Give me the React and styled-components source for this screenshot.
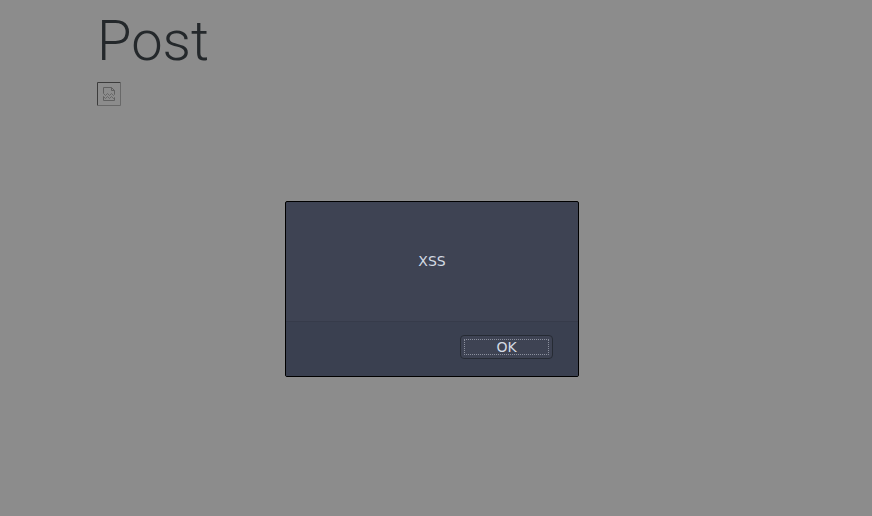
import React from 'react';
import styled, { createGlobalStyle } from 'styled-components';

const GlobalStyle = createGlobalStyle`
  * { box-sizing: border-box; }
  body { margin: 0; background: #8c8c8c; }
`;

const Page = styled.main`
  min-height: 100vh;
  padding: 8px 97px;
`;

const Title = styled.h1`
  margin: 0 0 8px;
  font: 300 56px/66px Roboto, sans-serif;
  color: #24282b;
`;

const MissingImage = styled.svg`
  display: block;
`;

const Overlay = styled.div`
  position: fixed;
  inset: 0;
  display: flex;
  justify-content: center;
  align-items: flex-start;
  padding: 201px 8px 0 0;
`;

const Dialog = styled.section`
  width: 294px;
  max-width: 100%;
  overflow: hidden;
  border: 1px solid #000;
  border-radius: 2px;
  background: #3e4353;
  color: #d3dae3;
  font: 14px/18px "DejaVu Sans", sans-serif;
`;

const Message = styled.p`
  margin: 0;
  padding: 50px 16px 51px;
  text-align: center;
`;

const Footer = styled.footer`
  display: flex;
  justify-content: flex-end;
  padding: 13px 25px 17px;
  border-top: 1px solid #363b4a;
  background: #3a4050;
`;

const OkButton = styled.button`
  width: 93px;
  height: 24px;
  padding: 3px;
  border: 1px solid #262b34;
  border-radius: 4px;
  background: #3e4353;
  color: inherit;
  font: inherit;
`;

const FocusRing = styled.span`
  display: block;
  height: 16px;
  border: 1px dotted #8b909e;
  border-radius: 1px;
  line-height: 14px;
`;

export default function App() {
  return (
    <>
      <GlobalStyle />
      <Page>
        <Title>Post</Title>
        <MissingImage width="24" height="24" viewBox="0 0 24 24" fill="none" role="img" aria-label="Missing image">
          <path d="M.5 23.5V.5h23" stroke="#3c3c3c" />
          <path d="M.5 23.5h23V.5" stroke="#686868" />
          <g stroke="#606060">
            <path d="M6.5 11.5v-6h8l3 3v4" />
            <path d="M14.5 5.5v3h3" />
            <path d="M6.5 11.5l2 2 2-2 2 2 2-2 2 2 1-1" strokeWidth="0.8" />
            <path d="M6.5 14.5l2 2 2-2 2 2 2-2 2 2 1-1" strokeWidth="0.8" />
            <path d="M6.5 14.5v4h11v-3" />
          </g>
        </MissingImage>
      </Page>
      <Overlay>
        <Dialog role="alertdialog" aria-modal="true" aria-describedby="message">
          <Message id="message">XSS</Message>
          <Footer>
            <OkButton type="button"><FocusRing>OK</FocusRing></OkButton>
          </Footer>
        </Dialog>
      </Overlay>
    </>
  );
}
